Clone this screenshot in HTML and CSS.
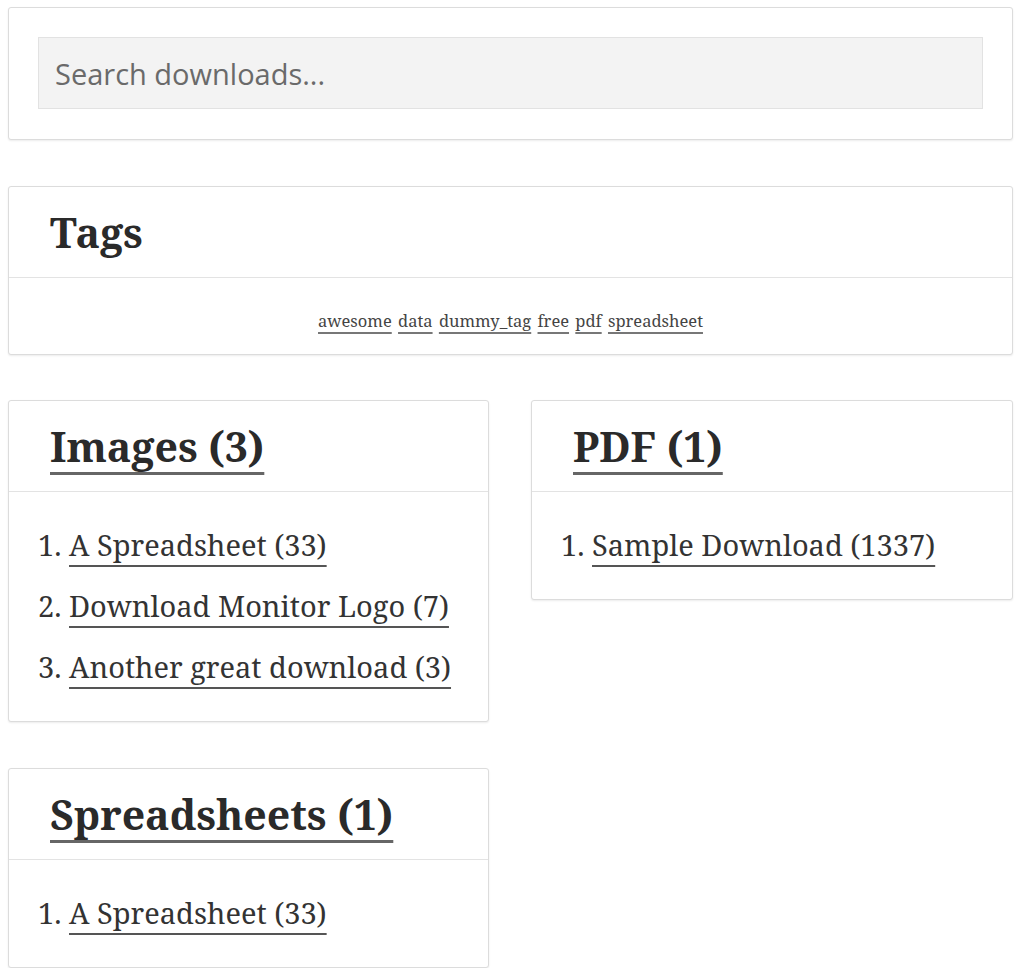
FILE: index.html
```html
<!DOCTYPE html>
<html lang="en">
<head>
<meta charset="utf-8">
<title>Downloads</title>
<link rel="stylesheet" href="styles.css">
</head>
<body>
<div class="page">
  <section class="card search-card">
    <input class="search-input" type="text" placeholder="Search downloads...">
  </section>

  <section class="card">
    <header class="card-head"><h2 class="title">Tags</h2></header>
    <div class="tag-body">
      <a href="#" class="tag">awesome</a>
      <a href="#" class="tag">data</a>
      <a href="#" class="tag">dummy_tag</a>
      <a href="#" class="tag">free</a>
      <a href="#" class="tag">pdf</a>
      <a href="#" class="tag">spreadsheet</a>
    </div>
  </section>

  <div class="grid">
    <section class="card">
      <header class="card-head"><h2 class="title"><a href="#">Images (3)</a></h2></header>
      <ol class="list">
        <li><a href="#">A Spreadsheet (33)</a></li>
        <li><a href="#">Download Monitor Logo (7)</a></li>
        <li><a href="#">Another great download (3)</a></li>
      </ol>
    </section>
    <section class="card">
      <header class="card-head"><h2 class="title"><a href="#">PDF (1)</a></h2></header>
      <ol class="list">
        <li><a href="#">Sample Download (1337)</a></li>
      </ol>
    </section>
    <section class="card">
      <header class="card-head"><h2 class="title"><a href="#">Spreadsheets (1)</a></h2></header>
      <ol class="list">
        <li><a href="#">A Spreadsheet (33)</a></li>
      </ol>
    </section>
  </div>
</div>
</body>
</html>
```

FILE: styles.css
```css
html, body {
  margin: 0;
  padding: 0;
  background: #ffffff;
}

body {
  font-family: "Noto Serif", "Droid Serif", "DejaVu Serif", serif;
  color: #333333;
}

.page {
  padding: 7px 11px 0 8px;
  display: flex;
  flex-direction: column;
  gap: 46px;
}

.card {
  background: #ffffff;
  border: 1px solid #dcdcdc;
  border-radius: 3px;
  box-shadow: 0 1px 2px rgba(0, 0, 0, 0.08);
}

.search-card {
  padding: 29px 29px 30px;
}

.search-input {
  display: block;
  width: 100%;
  box-sizing: border-box;
  height: 72px;
  margin: 0;
  padding: 0 16px;
  background: #f3f3f3;
  border: 1px solid #e2e2e2;
  border-radius: 0;
  font-family: "Open Sans", "Noto Sans", sans-serif;
  font-size: 29px;
  color: #666666;
  outline: none;
}

.search-input::placeholder {
  color: #6a6a6a;
  opacity: 1;
}

.card-head {
  height: 91px;
  box-sizing: border-box;
  padding: 20px 41px 0;
  border-bottom: 1px solid #e3e3e3;
}

.title {
  margin: 0;
  font-size: 41px;
  line-height: 50px;
  font-weight: 700;
  color: #2a2a2a;
}

.title a {
  color: #2a2a2a;
  text-decoration: underline;
  text-decoration-color: #666666;
  text-decoration-thickness: 3px;
  text-underline-offset: 10px;
}

.tag-body {
  height: 76px;
  box-sizing: border-box;
  padding-top: 33px;
  text-align: center;
  font-size: 16.5px;
  line-height: 20px;
}

.tag {
  color: #444444;
  text-decoration: underline;
  text-decoration-color: #777777;
  text-decoration-thickness: 2px;
  text-underline-offset: 5px;
  margin: 0 1px;
}

.grid {
  display: grid;
  grid-template-columns: 481px 482px;
  column-gap: 42px;
  row-gap: 46px;
  align-items: start;
  margin-top: -1px;
}

.list {
  margin: 0;
  padding: 22px 29px 24px;
  list-style-position: inside;
  font-size: 29px;
  line-height: 61px;
  color: #333333;
}

.list a {
  color: #333333;
  text-decoration: underline;
  text-decoration-color: #555555;
  text-decoration-thickness: 2px;
  text-underline-offset: 9px;
}
```
